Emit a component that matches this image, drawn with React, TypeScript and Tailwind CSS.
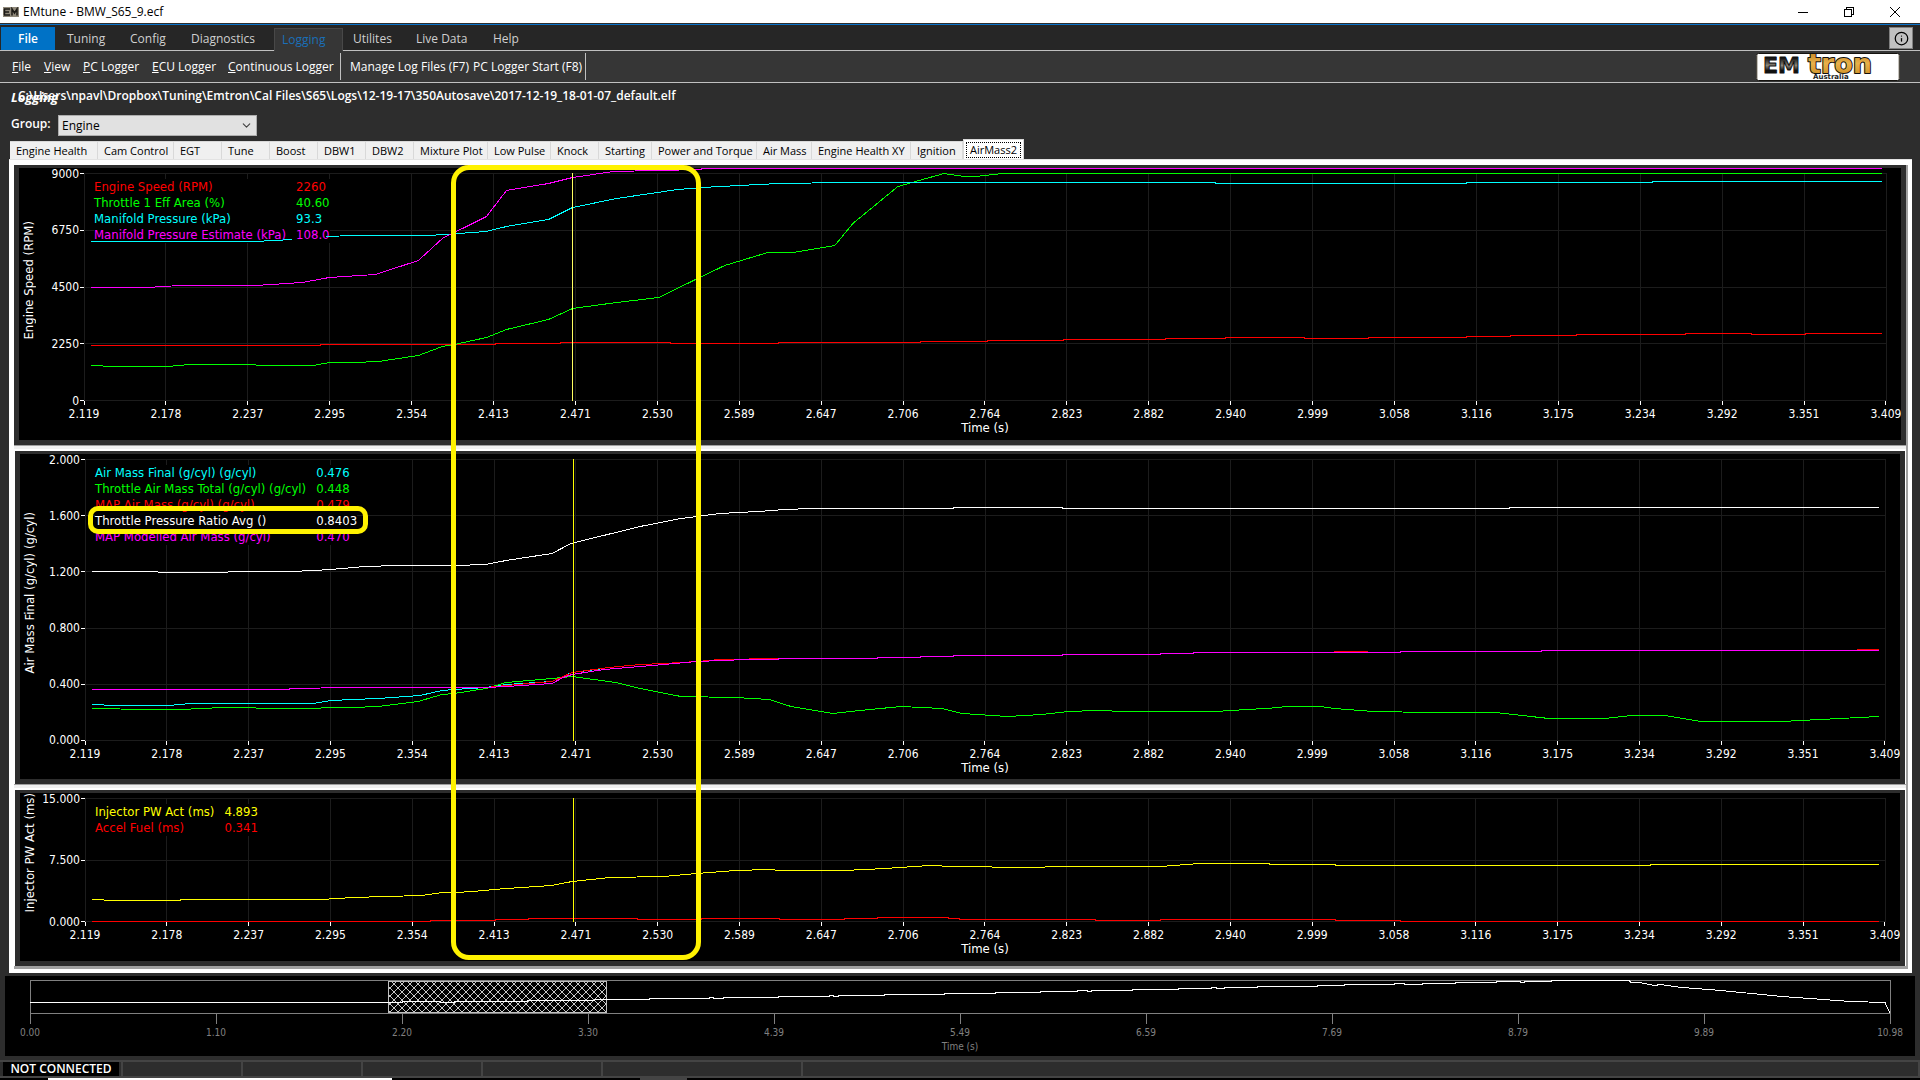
import { ChevronDown, Info } from "lucide-react";

type Series = { name: string; value: string; color: string; d: string };

type ChartProps = {
  title: string;
  yLabels: string[];
  height: number;
  heightClass: string;
  bodyClass: string;
  series: Series[];
  cursorColor: string;
  className?: string;
  children?: React.ReactNode;
};

const PLOT_WIDTH = 1800;

const ribbonTabs = [
  { label: "Tuning", cls: "w-[63px]" },
  { label: "Config", cls: "w-[61px]" },
  { label: "Diagnostics", cls: "w-[83px]" },
  { label: "Logging", cls: "w-[69px]", active: true },
  { label: "Utilites", cls: "ml-2.5 w-[63px]" },
  { label: "Live Data", cls: "w-[77px]" },
  { label: "Help", cls: "w-[40px]" },
];

const menuItems = [
  { label: "File", cls: "w-8" },
  { label: "View", cls: "w-[39px]" },
  { label: "PC Logger", cls: "w-[69px]" },
  { label: "ECU Logger", cls: "w-[76px]" },
  { label: "Continuous Logger", cls: "w-[112px]" },
];

const pages = [
  { label: "Engine Health", cls: "w-[88px]" },
  { label: "Cam Control", cls: "w-[76px]" },
  { label: "EGT", cls: "w-12" },
  { label: "Tune", cls: "w-12" },
  { label: "Boost", cls: "w-12" },
  { label: "DBW1", cls: "w-12" },
  { label: "DBW2", cls: "w-12" },
  { label: "Mixture Plot", cls: "w-[74px]" },
  { label: "Low Pulse", cls: "w-[63px]" },
  { label: "Knock", cls: "w-12" },
  { label: "Starting", cls: "w-[53px]" },
  { label: "Power and Torque", cls: "w-[105px]" },
  { label: "Air Mass", cls: "w-[55px]" },
  { label: "Engine Health XY", cls: "w-[99px]" },
  { label: "Ignition", cls: "w-[52px]" },
];

const times = [
  "2.119", "2.178", "2.237", "2.295", "2.354", "2.413", "2.471", "2.530",
  "2.589", "2.647", "2.706", "2.764", "2.823", "2.882", "2.940", "2.999",
  "3.058", "3.116", "3.175", "3.234", "3.292", "3.351", "3.409",
];

const overviewTimes = [
  "0.00", "1.10", "2.20", "3.30", "4.39", "5.49",
  "6.59", "7.69", "8.79", "9.89", "10.98",
];

const engineSeries: Series[] = [
  {
    name: "Engine Speed (RPM)",
    value: "2260",
    color: "#ff0000",
    d: "M7 172H236V171H411V170H476V169H586V170H694V169H836V168H902V167H978V166H1080V165H1140V164H1219V165H1283V164H1381V163H1425V162H1491V161H1600V160H1666V161H1720V160H1796",
  },
  {
    name: "Throttle 1 Eff Area (%)",
    value: "40.60",
    color: "#00ff00",
    d: "M7 192L30 193L83 193L106 191L171 191L173 192L229 192L245 189L269 189L294 188L334 182L358 173L370 171L402 164L422 156L464 146L488 135L532 129L574 124L613 105L640 92L683 79L708 79L750 72L768 50L813 13L859 0L879 3L891 3L917 0L1796 0",
  },
  {
    name: "Manifold Pressure (kPa)",
    value: "93.3",
    color: "#00ffff",
    d: "M7 68L171 68L208 66M242 63L269 62L345 62L402 58L422 53L464 46L488 34L532 25L593 16L617 14L674 11L694 10L760 9L1130 9V10H1381V9H1567V8H1796",
  },
  {
    name: "Manifold Pressure Estimate (kPa)",
    value: "108.0",
    color: "#ff00ff",
    d: "M7 114L62 114L96 112L171 112L218 109L245 104L291 101L334 87L358 65L402 43L422 17L464 10L488 4L529 -2L572 -3L617 -4V-5H1796",
  },
];

const airSeries: Series[] = [
  {
    name: "Air Mass Final (g/cyl) (g/cyl)",
    value: "0.476",
    color: "#00ffff",
    d: "M7 245L30 246L83 246L106 244L228 244L246 241L268 240L293 239L335 236L357 231L369 230L401 228L421 225L467 222L478 217L487 213L519 209",
  },
  {
    name: "Throttle Air Mass Total (g/cyl) (g/cyl)",
    value: "0.448",
    color: "#00ff00",
    d: "M7 249L63 250L95 250L138 248L204 249L229 249L244 248L268 248L293 247L333 242L357 235L369 234L401 229L421 223L467 219L487 217L531 223L555 229L596 237L650 238L684 240L706 247L748 254L775 251L816 247L857 249L877 254L922 257L957 255L984 252L1010 251L1043 252L1130 252L1195 248L1199 247L1235 247L1250 249L1288 252L1346 253L1410 253L1464 259L1519 259L1547 256L1580 256L1616 262L1696 262L1794 257",
  },
  {
    name: "MAP Air Mass (g/cyl) (g/cyl)",
    value: "0.479",
    color: "#ff0000",
    d: "M401 228L421 226L467 222L487 213L524 208L555 205L579 204L612 202L635 200L694 199L726 199M1249 192H1283M1772 190H1794",
  },
  {
    name: "Throttle Pressure Ratio Avg ()",
    value: "0.8403",
    color: "#ffffff",
    d: "M7 112L63 112L83 113L204 112L230 111L258 109L280 107L313 106L370 106L401 105L421 101L467 94L486 84L555 67L596 59L635 54L673 52L700 50L726 49H868V48H977V49H1424V48H1794",
  },
  {
    name: "MAP Modelled Air Mass (g/cyl)",
    value: "0.470",
    color: "#ff00ff",
    d: "M7 230L204 230V229L268 228L401 228L421 227L467 224L478 218L487 215L519 210L555 207L579 205L612 202L662 200L726 199H792V198H835V197H868V196H977V195H1075V194H1108V193H1315V192H1456V191H1794",
  },
];

const injectorSeries: Series[] = [
  {
    name: "Injector PW Act (ms)",
    value: "4.893",
    color: "#ffff00",
    d: "M7 101L30 102L95 102V101H236L268 99L301 98L337 97L357 94L370 94L388 93L421 90L467 87L487 83L525 79L579 78L612 75L650 72L684 71L696 72L759 72L800 70L845 67L868 68L944 69L977 68L1075 68L1102 66L1114 65H1184V66H1250V67H1565V66H1794",
  },
  {
    name: "Accel Fuel (ms)",
    value: "0.341",
    color: "#ff0000",
    d: "M7 123H345V122H410V121H443V120H552V121H616V120H694V121H759V120H792V119H863V120H874V121H1010V122H1075V121H1250V122H1315V123H1794",
  },
];

function Chart({
  title,
  yLabels,
  height,
  heightClass,
  bodyClass,
  series,
  cursorColor,
  className = "",
  children,
}: ChartProps) {
  return (
    <section className={`relative bg-[#2d2d2d] px-[5px] pt-[3px] pb-[5px] ${className}`}>
      <div
        className={`overflow-hidden bg-black pt-[5px] pr-[15px] font-['DejaVu_Sans_Condensed','DejaVu_Sans',sans-serif] text-[12px] leading-[14px] text-white ${bodyClass}`}
      >
        <div className={`flex ${heightClass}`}>
          <div className="flex w-5 items-center justify-center pb-3.5">
            <h2 className="rotate-180 text-[13px] whitespace-nowrap [writing-mode:vertical-rl]">{title}</h2>
          </div>
          <div className="flex w-[45px] flex-col justify-between">
            {yLabels.map((label) => (
              <div key={label} className="flex h-px items-center justify-end gap-px">
                <span>{label}</span>
                <i className="h-px w-1 bg-white" />
              </div>
            ))}
          </div>
          <div className="relative flex-1">
            <svg
              className="absolute inset-0 size-full overflow-visible"
              viewBox={`0 0 ${PLOT_WIDTH} ${height}`}
              preserveAspectRatio="none"
              shapeRendering="crispEdges"
              stroke="#1c1c1c"
            >
              {times.map((t, i) => {
                const x = (i * PLOT_WIDTH) / (times.length - 1);
                return <path key={t} d={`M${x} 0V${height}`} vectorEffect="non-scaling-stroke" />;
              })}
              {yLabels.map((l, i) => {
                const y = (i * (height - 1)) / (yLabels.length - 1) + 0.5;
                return <path key={l} d={`M0 ${y}H${PLOT_WIDTH}`} vectorEffect="non-scaling-stroke" />;
              })}
            </svg>
            <dl className="absolute top-1.5 left-2.5 grid grid-cols-[auto_auto] gap-x-2.5 bg-black text-[13px] leading-4 whitespace-nowrap">
              {series.map((s) => (
                <div key={s.name} className="contents" style={{ color: s.color }}>
                  <dt>{s.name}</dt>
                  <dd>{s.value}</dd>
                </div>
              ))}
            </dl>
            <svg
              className="absolute inset-0 size-full overflow-visible"
              viewBox={`0 0 ${PLOT_WIDTH} ${height}`}
              preserveAspectRatio="none"
              shapeRendering="crispEdges"
              fill="none"
            >
              <g transform="translate(0 0.5)">
                {series.map((s) => (
                  <path key={s.name} d={s.d} stroke={s.color} vectorEffect="non-scaling-stroke" />
                ))}
              </g>
              <path d={`M488 0V${height}`} stroke={cursorColor} vectorEffect="non-scaling-stroke" />
            </svg>
          </div>
        </div>
        <div className="ml-[65px] flex justify-between">
          {times.map((t) => (
            <div key={t} className="flex w-0 flex-col items-center">
              <i className="mb-0.5 h-1 w-px bg-white" />
              <span>{t}</span>
            </div>
          ))}
        </div>
        <p className="ml-[65px] text-center text-[13px]">Time (s)</p>
      </div>
      {children}
    </section>
  );
}

function Splitter() {
  return <div className="h-1.5 border-t border-b-2 border-t-[#a0a0a0] border-b-white bg-[#f0f0f0]" />;
}

function Logo() {
  return (
    <svg className="mr-5 h-7 w-36 overflow-visible" viewBox="0 0 144 28" role="img" aria-label="EMtron Australia">
      <defs>
        <linearGradient id="steel" x1="0" y1="0" x2="0" y2="1">
          <stop offset="0.2" stopColor="#111" />
          <stop offset="0.5" stopColor="#8a8478" />
          <stop offset="0.7" stopColor="#111" />
        </linearGradient>
        <linearGradient id="gold" x1="0" y1="0" x2="0" y2="1">
          <stop offset="0" stopColor="#b87a18" />
          <stop offset="0.5" stopColor="#e8b04a" />
          <stop offset="1" stopColor="#c8871c" />
        </linearGradient>
      </defs>
      <rect x="0.5" y="0.5" width="143" height="27" rx="2" fill="#fff" stroke="#15130f" />
      <path d="M1 2V26M143 2V26" stroke="#8a8478" />
      <g fontFamily="DejaVu Sans" fontWeight="700" strokeLinejoin="round">
        <text x="7" y="20" fontSize="22" fill="url(#steel)" stroke="#111" strokeWidth="1">EM</text>
        <text x="52" y="20" fontSize="27" fill="url(#gold)" stroke="#111" strokeWidth="2" paintOrder="stroke">tron</text>
        <text x="57" y="26" fontSize="7" fill="#222">Australia</text>
      </g>
    </svg>
  );
}

function TitleBar() {
  return (
    <header className="flex h-[23px] items-center bg-white pl-[3px] text-black">
      <svg className="h-2.5 w-4" viewBox="0 0 16 10" aria-hidden="true">
        <rect width="16" height="10" fill="#8f887a" />
        <path d="M1 2h6M1 5h5M1 8h6M1.500 2v6M9 8.500V2l2.500 4L14 2v6.500" stroke="#1c1a17" strokeWidth="1.500" fill="none" />
      </svg>
      <h1 className="ml-1 flex-1 text-[12px]">EMtune - BMW_S65_9.ecf</h1>
      <div className="flex pr-0.5">
        <button aria-label="Minimize" className="flex w-[46px] justify-center">
          <svg width="12" height="12" stroke="#000" shapeRendering="crispEdges"><path d="M1 6.500h10" /></svg>
        </button>
        <button aria-label="Restore" className="flex w-[46px] justify-center">
          <svg width="12" height="12" stroke="#000" fill="none" shapeRendering="crispEdges">
            <path d="M1.500 3.500h7v7h-7zM3.500 3.500v-2h7v7h-2" />
          </svg>
        </button>
        <button aria-label="Close" className="flex w-[46px] justify-center">
          <svg width="12" height="12" stroke="#000"><path d="M1 1l10 10M11 1L1 11" /></svg>
        </button>
      </div>
    </header>
  );
}

function Overview() {
  return (
    <section className="mx-[5px] mt-[3px] h-20 bg-black px-[25px] pt-1 font-['DejaVu_Sans_Condensed','DejaVu_Sans',sans-serif] text-[10px] leading-[14px] text-[#808080]">
      <svg
        className="h-[34px] w-full overflow-visible"
        viewBox="0 0 1860 34"
        preserveAspectRatio="none"
        shapeRendering="crispEdges"
        fill="none"
      >
        <defs>
          <pattern id="hatch" width="8" height="8" patternUnits="userSpaceOnUse">
            <path d="M0 0L8 8M8 0L0 8" stroke="#c8c8c8" />
          </pattern>
        </defs>
        <path d="M0 .5H1860V33.500H0Z" stroke="#808080" />
        <path d="M358 1.500H576V32.500H358Z" fill="url(#hatch)" stroke="#c0c0c0" />
        <path
          d="M0 22.500H372V21.500H410V22.500H424V21.500H497V20.500H564V19.500H619V18.500H679V17.500H683V18.500H693V17.500H748L749 16.500H799V15.500H803V16.500H808V15.500H854V14.500H914V13.500H965V12.500H1010V11.500H1047V10.500H1057V11.500H1061V10.500H1102V9.500H1148V8.500H1181V7.500H1186V8.500H1194V7.500H1227V6.500H1287V5.500H1314V4.500H1364V3.500H1374V4.500H1392V3.500H1425V2.500H1466V1.500H1490V2.500H1494V1.500H1521V.5H1599L1601 2.500L1609 2.500L1625 5.500L1630 4.500L1652 7.500L1691 10.500L1752 16.500L1821 21.500L1855 22.500L1860 33"
          stroke="#fff"
          vectorEffect="non-scaling-stroke"
        />
      </svg>
      <div className="flex justify-between">
        {overviewTimes.map((t) => (
          <div key={t} className="flex w-0 flex-col items-center">
            <i className="mb-0.5 h-2.5 w-px bg-[#808080]" />
            <span>{t}</span>
          </div>
        ))}
      </div>
      <p className="text-center">Time (s)</p>
    </section>
  );
}

export default function App() {
  return (
    <div className="flex min-h-screen flex-col bg-[#2d2d2d] font-['Open_Sans','Segoe_UI',sans-serif] text-[12px] text-white">
      <TitleBar />

      <nav className="flex h-7 border-t border-b border-t-[#2d2d2d] border-b-[#c0c0c0] bg-[#262626] shadow-[inset_0_1px_#0a72c8]">
        <button className="mt-[3px] ml-px w-[54px] bg-[#0072c6] font-semibold">File</button>
        <div className="flex flex-1 pt-1 pl-3 text-[#d0d0d0]">
          {ribbonTabs.map((tab) => (
            <button
              key={tab.label}
              className={
                tab.active
                  ? `-mb-px border border-b-0 border-[#484848] bg-[#363636] pl-[7px] text-left text-[#1a6fb8] ${tab.cls}`
                  : `text-left ${tab.cls}`
              }
            >
              {tab.label}
            </button>
          ))}
        </div>
        <button
          aria-label="About"
          className="mt-[3px] mr-[7px] flex h-[22px] w-6 items-center justify-center border border-[#808080] bg-[#c0c0c0] text-black"
        >
          <Info size={15} strokeWidth={2} />
        </button>
      </nav>

      <div className="flex h-8 items-center border-b border-[#c0c0c0] bg-[#363636] pl-3">
        {menuItems.map((item) => (
          <button key={item.label} className={`text-left whitespace-nowrap ${item.cls}`}>
            <u>{item.label[0]}</u>
            {item.label.slice(1)}
          </button>
        ))}
        <div className="flex h-[27px] items-center border-x border-[#c0c0c0] pr-2 pl-[9px]">
          <button className="w-[123px] text-left whitespace-nowrap">Manage Log Files (F7)</button>
          <button className="w-[104px] text-left whitespace-nowrap">PC Logger Start (F8)</button>
        </div>
        <div className="ml-auto">
          <Logo />
        </div>
      </div>

      <div className="relative h-[32px] pt-1 pl-[18px] font-semibold">
        <span className="absolute left-[11px] pt-px text-[13px] leading-[18px] font-bold italic">Logging</span>
        <p>
          C:\Users\npavl\Dropbox\Tuning\Emtron\Cal Files\S65\Logs\12-19-17\350Autosave\2017-12-19_18-01-07_default.elf
        </p>
      </div>

      <div className="flex h-6 items-start pl-[11px]">
        <label htmlFor="group" className="w-[47px] font-semibold">Group:</label>
        <div className="relative">
          <select
            id="group"
            className="h-[21px] w-[199px] appearance-none border border-[#adadad] bg-[#e1e1e1] pl-[3px] text-black"
          >
            <option>Engine</option>
          </select>
          <ChevronDown className="pointer-events-none absolute top-1 right-1 text-[#404040]" size={13} strokeWidth={2} />
        </div>
      </div>

      <div role="tablist" className="flex h-5 items-end pl-2.5 text-black">
        {pages.map((page) => (
          <button
            key={page.label}
            role="tab"
            className={`h-[18px] border-t border-r border-[#d9d9d9] bg-[#f0f0f0] pl-1.5 text-left text-[11px] leading-4 whitespace-nowrap ${page.cls}`}
          >
            {page.label}
          </button>
        ))}
        <button role="tab" aria-selected="true" className="h-5 w-[61px] border border-b-0 border-[#d9d9d9] bg-white p-0.5 text-[11px]">
          <span className="block border border-dotted border-black leading-[14px]">AirMass2</span>
        </button>
      </div>

      <main className="relative mr-2 ml-[9px] border-t border-[#e3e3e3] bg-white pt-[5px] pr-1 pb-1 pl-[5px]">
        <div className="border-r-2 border-b-[3px] border-[#a0a0a0]">
          <Chart
            title="Engine Speed (RPM)"
            yLabels={["9000", "6750", "4500", "2250", "0"]}
            height={228}
            heightClass="h-[228px]"
            bodyClass="h-[272px]"
            series={engineSeries}
            cursorColor="#ffff60"
          />
          <Splitter />
          <Chart
            title="Air Mass Final (g/cyl) (g/cyl)"
            yLabels={["2.000", "1.600", "1.200", "0.800", "0.400", "0.000"]}
            height={282}
            heightClass="h-[282px]"
            bodyClass="h-[325px]"
            series={airSeries}
            cursorColor="#ffff00"
            className="mx-px"
          >
            <div className="absolute top-[55px] left-[73px] h-[28px] w-[280px] rounded-[10px] border-[5px] border-[#fff200]" />
          </Chart>
          <Splitter />
          <Chart
            title="Injector PW Act (ms)"
            yLabels={["15.000", "7.500", "0.000"]}
            height={124}
            heightClass="h-[124px]"
            bodyClass="h-[168px]"
            series={injectorSeries}
            cursorColor="#ffff00"
            className="mx-px"
          />
        </div>
        {/* highlighted time span */}
        <div className="pointer-events-none absolute top-[5px] bottom-[13px] left-[442px] w-[250px] rounded-[18px] border-[5px] border-[#fff200]" />
      </main>

      <Overview />

      <footer className="mt-1 flex h-[18px] border-y-2 border-[#444] text-[#2d2d2d]">
        <p className="mr-0.5 ml-[3px] w-[116px] bg-black text-center font-semibold leading-[14px] text-white">NOT CONNECTED</p>
        <span className="w-[120px] border-l-2 border-[#444]" />
        <span className="w-[120px] border-l-2 border-[#444]" />
        <span className="w-[120px] border-l-2 border-[#444]" />
        <span className="w-[120px] border-l-2 border-[#444]" />
        <span className="w-[200px] border-l-2 border-[#444]" />
        <span className="flex-1 border-x-2 border-[#444]" />
      </footer>
      <div className="flex h-0.5 bg-black pl-12">
        <span className="mr-[248px] w-[344px] bg-white" />
        <span className="w-[47px] bg-[#444]" />
      </div>
    </div>
  );
}
